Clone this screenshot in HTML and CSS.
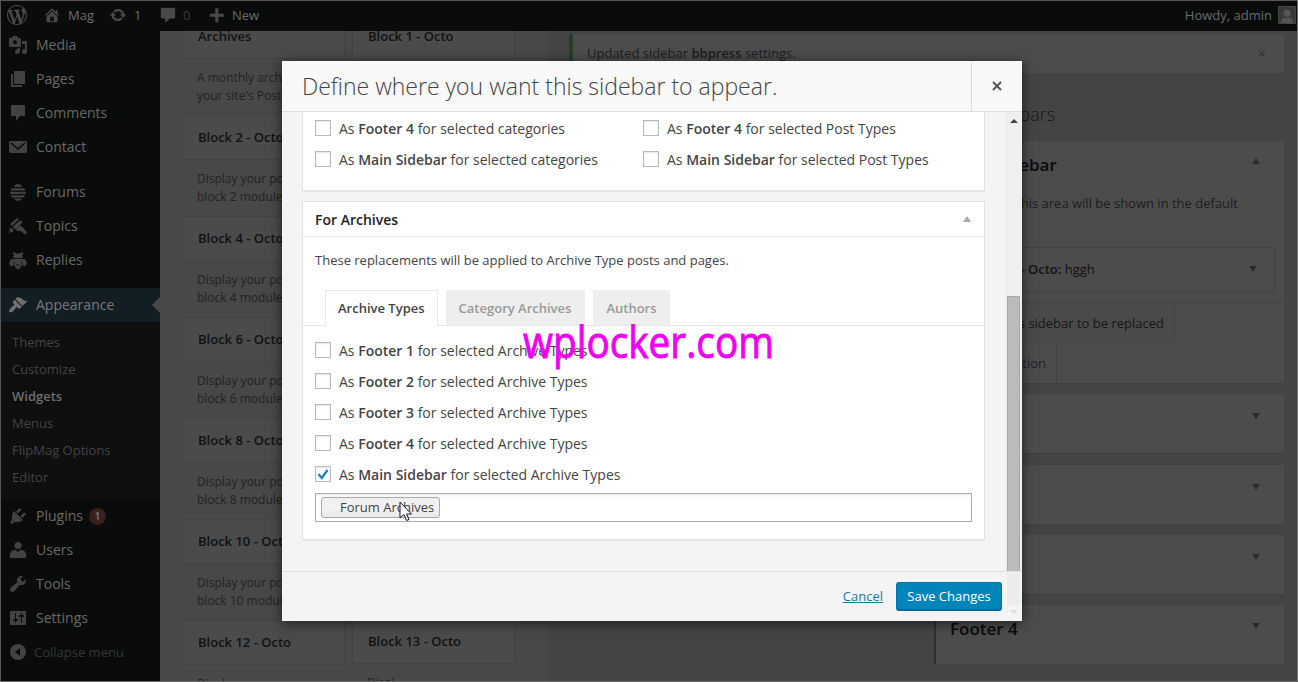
FILE: index.html
```html
<!DOCTYPE html>
<html lang="en">
<head>
<meta charset="utf-8">
<title>Widgets</title>
<link rel="stylesheet" href="styles.css">
</head>
<body>
<div class="screen">
  <header class="bar">
    <svg class="logo" viewBox="0 0 20 20"><path d="M20 10c0-5.51-4.49-10-10-10C4.48 0 0 4.49 0 10c0 5.52 4.48 10 10 10 5.51 0 10-4.48 10-10zM7.78 15.37L4.37 6.22c.55-.02 1.17-.08 1.17-.08.5-.06.44-1.13-.06-1.11 0 0-1.45.11-2.37.11-.18 0-.37 0-.58-.01C4.12 2.69 6.87 1.11 10 1.11c2.33 0 4.45.87 6.05 2.34-.68-.11-1.65.39-1.65 1.58 0 .74.45 1.36.9 2.1.35.61.55 1.36.55 2.46 0 1.49-1.4 5-1.4 5l-3.03-8.37c.54-.02.82-.17.82-.17.5-.05.44-1.25-.06-1.22 0 0-1.44.12-2.38.12-.87 0-2.33-.12-2.33-.12-.5-.03-.56 1.2-.06 1.22l.92.08 1.26 3.41zM17.41 10c.24-.64.74-1.87.43-4.25.7 1.29 1.05 2.71 1.05 4.25 0 3.29-1.73 6.24-4.4 7.78.97-2.59 1.94-5.2 2.92-7.78zM6.1 18.09C3.12 16.65 1.11 13.53 1.11 10c0-1.3.23-2.48.72-3.59C3.25 10.3 4.67 14.2 6.1 18.09zm4.03-6.63l2.58 6.98c-.86.29-1.76.45-2.71.45-.79 0-1.57-.11-2.29-.33.81-2.38 1.62-4.74 2.42-7.1z"/></svg>
    <div class="bar-item site"><svg viewBox="0 0 20 20"><path d="M16 8.5l1.53 1.53-1.06 1.06L10 4.6l-6.47 6.49-1.06-1.06L10 2.5l4 4v-2h2v4zm-6-2.46l6 5.99V18H4v-5.97zM12 17v-5H8v5h4z"/></svg>Mag</div>
    <div class="bar-item updates"><svg viewBox="0 0 20 20"><path d="M10.2 3.28c3.53 0 6.43 2.61 6.92 6h2.08l-3.5 4-3.5-4h2.32c-.45-1.97-2.21-3.45-4.32-3.45-1.45 0-2.73.71-3.54 1.78L4.95 5.66C6.23 4.2 8.11 3.28 10.2 3.28zm-.4 13.44c-3.52 0-6.43-2.61-6.92-6H.8l3.5-4c1.17 1.33 2.33 2.67 3.5 4H5.48c.45 1.97 2.21 3.45 4.32 3.45 1.45 0 2.73-.71 3.54-1.78l1.71 1.95c-1.28 1.46-3.15 2.38-5.25 2.38z"/></svg>1</div>
    <div class="bar-item replies"><svg viewBox="0 0 20 20"><path d="M4 2h12c1.100 0 2 .9 2 2v8c0 1.100-.9 2-2 2h-4l-5 5v-5H4c-1.100 0-2-.9-2-2V4c0-1.100.9-2 2-2z"/></svg><span>0</span></div>
    <div class="bar-item new"><svg viewBox="0 0 20 20"><path d="M17.500 8.500v3.500h-6v6h-3.500v-6h-6V8.500h6v-6h3.500v6z"/></svg>New</div>
    <div class="account">Howdy, admin<svg class="avatar" viewBox="0 0 18 18"><circle cx="9" cy="7" r="4"/><path d="M2 18c0-4 2-6 5-6h4c3 0 5 2 5 6z"/></svg></div>
  </header>

  <div class="workspace">
    <nav class="menu">
      <a class="entry"><svg viewBox="0 0 20 20"><path fill-rule="evenodd" d="M13 11V4c0-.55-.45-1-1-1h-1.670L9 1H5L3.670 3H2c-.55 0-1 .45-1 1v7c0 .55.45 1 1 1h10c.55 0 1-.45 1-1zM7 5.200a2 2 0 1 0 .01 0zM14 6h5v10.500c0 1.380-1.120 2.500-2.500 2.500S14 17.880 14 16.500s1.120-2.500 2.500-2.500c.17 0 .34.02.5.05V9h-3V6zm-4 8.050V13h2v3.500c0 1.380-1.120 2.500-2.500 2.500S7 17.880 7 16.500 8.120 14 9.500 14c.17 0 .34.02.5.05z"/></svg>Media</a>
      <a class="entry"><svg viewBox="0 0 20 20"><path d="M6 15V2h11v13H6zm-1 1h9v2H3V5h2v11z"/></svg>Pages</a>
      <a class="entry"><svg viewBox="0 0 20 20"><path d="M4 2h12c.6 0 1 .4 1 1v9c0 .6-.4 1-1 1h-4l-4 5v-5H4c-.6 0-1-.4-1-1V3c0-.6.4-1 1-1z"/></svg>Comments</a>
      <a class="entry"><svg viewBox="0 0 20 20"><path d="M2.500 4h15c.8 0 1.500.7 1.500 1.500v9c0 .8-.7 1.500-1.500 1.500h-15c-.8 0-1.500-.7-1.500-1.500v-9C1 4.700 1.700 4 2.500 4z"/><path class="cut" d="M3 6l7 6 7-6"/></svg>Contact</a>
      <div class="gap"></div>
      <a class="entry"><svg viewBox="0 0 20 20"><path d="M6 5c1-4 7-4 8 0zM3.500 6.200h13l1 2.300H2.500zM2 9.700h16l-.5 2.300h-15zM3 13.200h14l-1 2.300H4zM6 16.500h8c-1 3-7 3-8 0z"/></svg>Forums</a>
      <a class="entry"><svg viewBox="0 0 20 20"><path d="M2 8l7-6 2 1-7 7zM4.500 11l8-7 2 2.500-7 7zM8 13.500l4-4 3 2 4 5-2 2-5-4-2 1zM1.500 12l3 .5 1 3-4 1.500z"/></svg>Topics</a>
      <a class="entry"><svg viewBox="0 0 20 20"><path d="M6 2l2 1.500h4L14 2l1.500 1L14 5l1 2-1.500 2 4 .5 1.500 4-2 3-3-1.500L12 18l-2 1.500L8 18l-2-3-3 1.500-2-3 1.500-4 4-.5L5 7l1-2-1.500-2z"/><path class="cut thin" d="M6 8.500h8M6.500 11.500l-1 3M13.500 11.500l1 3M8 15h4"/></svg>Replies</a>
      <div class="gap"></div>
      <a class="entry current"><svg viewBox="0 0 20 20"><path d="M14.480 11.060L7.410 3.990l1.500-1.500c.5-.56 2.300-.47 3.510.32 1.210.8 1.430 1.280 2.910 2.100 1.180.64 2.450 1.260 4.450.85zm-.71.71L6.700 4.700 4.930 6.470c-.39.39-.39 1.020 0 1.410l1.060 1.060c.39.39.39 1.030 0 1.420-.6.6-1.430 1.110-2.210 1.690-.35.26-.7.53-1.010.84C1.430 14.230.4 16.080 1.400 17.070c.99 1 2.840-.03 4.180-1.360.31-.31.58-.66.85-1.020.57-.78 1.080-1.610 1.690-2.210.39-.39 1.020-.39 1.410 0l1.060 1.060c.39.39 1.020.39 1.410 0z"/></svg>Appearance<i class="notch"></i></a>
      <div class="submenu"><a>Themes</a><a>Customize</a><a class="active">Widgets</a><a>Menus</a><a>FlipMag Options</a><a>Editor</a></div>
      <a class="entry"><svg viewBox="0 0 20 20"><path d="M13.110 4.360L9.870 7.600 8 5.730l3.240-3.240c.35-.34 1.050-.2 1.560.32.52.51.66 1.210.31 1.550zm-8 1.770l.91-1.120 9.010 9.010-1.190.84c-.71.71-2.630 1.160-3.820 1.160H6.140L4.900 17.260c-.59.59-1.540.59-2.120 0-.59-.58-.59-1.530 0-2.120l1.240-1.240v-3.880c0-1.130.4-3.190 1.090-3.890zm7.260 3.970l3.240-3.240c.34-.35 1.040-.21 1.550.31.52.51.66 1.210.31 1.550l-3.240 3.250z"/></svg>Plugins<b class="count">1</b></a>
      <a class="entry"><svg viewBox="0 0 20 20"><circle cx="10" cy="5.500" r="3.500"/><path d="M6.500 10h1l2.500 2 2.500-2h1c2.500 0 4.500 2 4.500 4.500V17c0 .6-.4 1-1 1H3c-.6 0-1-.4-1-1v-2.500C2 12 4 10 6.500 10z"/></svg>Users</a>
      <a class="entry"><svg viewBox="0 0 20 20"><path d="M16.680 9.770c-1.340 1.340-3.300 1.670-4.950.99l-5.410 6.520c-.99.99-2.590.99-3.580 0s-.99-2.590 0-3.570l6.520-5.420c-.68-1.650-.35-3.610.99-4.950 1.280-1.280 3.120-1.620 4.720-1.060l-2.890 2.890 2.820 2.820 2.860-2.870c.53 1.580.18 3.390-1.080 4.650z"/></svg>Tools</a>
      <a class="entry"><svg viewBox="0 0 20 20"><path d="M18 16V4c0-.55-.45-1-1-1H3c-.55 0-1 .45-1 1v12c0 .55.45 1 1 1h14c.55 0 1-.45 1-1zM8 11h1c.55 0 1 .45 1 1s-.45 1-1 1H8v1.500c0 .28-.22.5-.5.5s-.5-.22-.5-.5V13H6c-.55 0-1-.45-1-1s.45-1 1-1h1V5.500c0-.28.22-.5.5-.5s.5.22.5.5V11zm5-2h-1c-.55 0-1-.45-1-1s.45-1 1-1h1V5.500c0-.28.22-.5.5-.5s.5.22.5.5V7h1c.55 0 1 .45 1 1s-.45 1-1 1h-1v5.500c0 .28-.22.5-.5.5s-.5-.22-.5-.5V9z"/></svg>Settings</a>
      <a class="entry collapse"><svg viewBox="0 0 20 20"><circle cx="10" cy="10" r="8"/><path class="hole" d="M12 6v8l-5-4z"/></svg>Collapse menu</a>
    </nav>

    <section class="available">
      <div class="column">
        <div class="widget">Archives</div><p>A monthly archive of<br>your site's Posts.</p>
        <div class="widget">Block 2 - Octo</div><p>Display your posts<br>block 2 module.</p>
        <div class="widget">Block 4 - Octo</div><p>Display your posts<br>block 4 module.</p>
        <div class="widget">Block 6 - Octo</div><p>Display your posts<br>block 6 module.</p>
        <div class="widget">Block 8 - Octo</div><p>Display your posts<br>block 8 module.</p>
        <div class="widget">Block 10 - Octo</div><p>Display your posts<br>block 10 module.</p>
        <div class="widget">Block 12 - Octo</div><p>Displ</p>
      </div>
      <div class="column second">
        <div class="widget">Block 1 - Octo</div>
        <div class="last"><div class="widget">Block 13 - Octo</div><p>Displ</p></div>
      </div>
    </section>

    <main class="areas">
      <div class="notice"><span>Updated sidebar <b>bbpress</b> settings.</span><span class="dismiss">×</span></div>
      <h2>Sidebars</h2>
      <div class="area open">
        <div class="area-head"><h3>Main Sidebar</h3><i class="up"></i></div>
        <p>this area will be shown in the default</p>
        <div class="placed"><span><b>Block - Octo:</b> hggh</span><i class="down"></i></div>
        <div class="options">
          <div class="option allow">this sidebar to be replaced</div>
          <div class="option where">location</div>
        </div>
      </div>
      <div class="area"><i class="down"></i></div>
      <div class="area"><i class="down"></i></div>
      <div class="area"><i class="down"></i></div>
      <div class="area marked"><h3>Footer 4</h3><i class="down"></i></div>
    </main>
  </div>
</div>

<div class="dialog">
  <div class="dialog-head"><h1>Define where you want this sidebar to appear.</h1><div class="close"><svg viewBox="0 0 12 12"><path d="M2 2l8 8M10 2l-8 8"/></svg></div></div>
  <div class="dialog-main">
    <div class="panels">
      <div class="panel first">
        <div><label><i class="box"></i><span>As <b>Footer 4</b> for selected categories</span></label><label><i class="box"></i><span>As <b>Main Sidebar</b> for selected categories</span></label></div>
        <div><label><i class="box"></i><span>As <b>Footer 4</b> for selected Post Types</span></label><label><i class="box"></i><span>As <b>Main Sidebar</b> for selected Post Types</span></label></div>
      </div>
      <div class="panel">
        <div class="panel-head">For Archives<i class="up"></i></div>
        <p class="about">These replacements will be applied to Archive Type posts and pages.</p>
        <div class="tabs"><span class="tab on">Archive Types</span><span class="tab">Category Archives</span><span class="tab">Authors</span></div>
        <div class="choices">
          <label><i class="box"></i><span>As <b>Footer 1</b> for selected Archive Types</span></label>
          <label><i class="box"></i><span>As <b>Footer 2</b> for selected Archive Types</span></label>
          <label><i class="box"></i><span>As <b>Footer 3</b> for selected Archive Types</span></label>
          <label><i class="box"></i><span>As <b>Footer 4</b> for selected Archive Types</span></label>
          <label><i class="box"><svg viewBox="0 0 14 14"><path d="M2.500 7l3.300 4L11.500 3"/></svg></i><span>As <b>Main Sidebar</b> for selected Archive Types</span></label>
          <div class="picker"><span class="tag">Forum Archives</span></div>
        </div>
      </div>
    </div>
    <div class="scroll"><i class="arrow"></i><div class="thumb"></div></div>
  </div>
  <div class="dialog-foot"><a class="cancel">Cancel</a><span class="save">Save Changes</span><div class="scroll-end"><i></i></div></div>
</div>

<svg class="watermark" viewBox="0 0 260 56"><text x="1" y="38" textLength="251" lengthAdjust="spacingAndGlyphs">wplocker.com</text></svg>
<svg class="pointer" viewBox="0 0 13 21"><path d="M1 1v16l4-3.500 2.500 6 2.500-1-2.500-5.500h5z"/></svg>
</body>
</html>
```
FILE: styles.css
```css
* { box-sizing: border-box; }
body { margin: 0; width: 1298px; height: 682px; overflow: hidden; position: relative; font-family: "Open Sans", "Noto Sans", sans-serif; font-size: 13px; color: #444; }
h1, h2, h3, p { margin: 0; }
i { font-style: normal; }
b { font-weight: 600; }

.screen { height: 682px; display: flex; flex-direction: column; background: #444; border: 1px solid #555756; border-right: 1px solid #747474; border-bottom-color: #6d6d6d; overflow: hidden; }
.bar { height: 30px; flex: none; position: relative; z-index: 1; background: #0a0c0b; color: #6b6b6b; display: flex; align-items: center; line-height: 28px; padding-bottom: 2px; }
.bar svg { fill: #494949; }
.logo { width: 20px; height: 20px; margin-left: 6px; }
.bar-item { display: flex; align-items: center; }
.bar-item svg { width: 18px; height: 18px; }
.site { width: 66px; margin-left: 16px; gap: 7px; }
.updates { width: 50px; gap: 7px; }
.replies { width: 49px; gap: 6px; color: #3a3a3a; }
.new { gap: 6px; }
.account { margin-left: auto; display: flex; align-items: center; gap: 6px; padding-right: 1px; }
.bar .avatar { width: 18px; height: 18px; background: #393939; fill: #555; border: 1px solid #444; }

.workspace { flex: 1; min-height: 0; display: flex; }
.menu { width: 159px; flex: none; background: #0a0c0b; margin-top: -3px; }
.entry { height: 34px; display: flex; align-items: center; padding-left: 7px; gap: 8px; font-size: 14px; line-height: 34px; color: #686868; position: relative; }
.entry svg { width: 20px; height: 20px; fill: #424242; flex: none; }
.entry .cut { fill: none; stroke: #0a0c0b; stroke-width: 1.6; }
.entry .thin { stroke-width: .8; }
.entry .hole { fill: #0a0c0b; }
.gap { height: 11px; }
.current { background: #121d24; color: #787878; }
.current svg { fill: #707070; }
.notch { position: absolute; right: 0; top: 9px; border: 8px solid transparent; border-left: 0; border-right-color: #484848; }
.submenu { height: 177px; background: #0f0f0f; padding: 7px 0 0 11px; }
.submenu a { display: block; height: 27px; line-height: 27px; color: #434343; }
.submenu .active { color: #6e6e6e; font-weight: 600; }
.count { width: 17px; height: 17px; border-radius: 50%; background: #38201c; color: #7b6a66; font-size: 10px; font-weight: 700; line-height: 16px; text-align: center; margin-left: -2px; }
.collapse { font-size: 13px; color: #363636; gap: 6px; }
.collapse svg { fill: #424242; }

.available { width: 389px; flex: none; background: #484848; border-right: 1px solid #414141; padding-left: 22px; display: flex; gap: 7px; overflow: hidden; }
.column { width: 163px; height: 662px; flex: none; margin-top: -17px; }
.widget { height: 45px; background: #4b4b4b; border: 1px solid #434343; padding-left: 15px; line-height: 42px; font-weight: 600; color: #111; white-space: nowrap; }
.column p { height: 56px; padding: 10px 0 0 15px; line-height: 18px; font-size: 12px; color: #222; white-space: nowrap; }
.second { display: flex; flex-direction: column; justify-content: space-between; }
.last { height: 57px; }

.areas { flex: 1; padding: 3px 13px 0 20px; display: flex; flex-direction: column; color: #1c1c1c; }
.notice { height: 39px; flex: none; background: #4c4c4c; border-left: 4px solid #23402d; padding: 0 18px 0 14px; display: flex; justify-content: space-between; line-height: 38px; }
.dismiss { font-size: 15px; color: #303030; }
.areas h2 { height: 68px; line-height: 82px; padding-left: 416px; font-size: 18px; font-weight: 300; color: #181818; }
.area { width: 350px; height: 59px; flex: none; align-self: flex-end; background: #4c4c4c; margin-bottom: 11.300px; padding: 19px 24px 0 15px; display: flex; justify-content: space-between; box-shadow: 0 1px 1px #404040; }
.area > i { margin-left: auto; }
.area h3 { font-size: 17px; font-weight: 600; line-height: 24px; color: #0b0b0b; }
.open { height: 242px; display: block; padding: 0; }
.area-head { height: 48px; padding: 0 24px 0 15px; display: flex; justify-content: space-between; align-items: center; }
.area-head i { margin-bottom: 8px; }
.up { display: block; width: 0; height: 0; border: 4.500px solid transparent; border-top: 0; border-bottom: 6px solid #2b2b2b; }
.down { display: block; width: 0; height: 0; border: 4.500px solid transparent; border-bottom: 0; border-top: 6px solid #2b2b2b; }
.area > p { text-align: right; padding-right: 46px; line-height: 28px; height: 58px; }
.placed { width: 333px; height: 45px; margin-left: 8px; padding: 0 17px 2px 40px; display: flex; align-items: center; justify-content: space-between; border: 1px solid #424242; color: #111; }
.placed span { white-space: nowrap; }
.options { margin-top: 10px; border-top: 1px solid #434343; color: #161616; }
.option { height: 40px; line-height: 40px; text-align: right; border-right: 1px solid #404343; }
.allow { width: 241px; padding-right: 10px; background: #484b4a; }
.where { width: 123px; padding-right: 10px; color: #202328; }
.marked { border-left: 2px solid #1f382b; padding-left: 14px; padding-top: 12px; }
.marked i { margin-top: 6px; }

.dialog { position: absolute; left: 282px; top: 61px; width: 740px; height: 560px; background: #f4f4f4; box-shadow: 0 2px 12px rgba(0, 0, 0, .6); display: flex; flex-direction: column; }
.dialog-head { height: 51px; flex: none; background: #f8f8f8; border-bottom: 1px solid #ddd; display: flex; padding-left: 20px; justify-content: space-between; }
.dialog-head h1 { font-size: 23px; font-weight: 300; line-height: 50px; color: #444; white-space: nowrap; }
.close { width: 51px; border-left: 1px solid #ddd; display: flex; align-items: center; justify-content: center; }
.close svg { width: 12px; height: 12px; fill: none; stroke: #555; stroke-width: 2; }
.dialog-main { flex: 1; min-height: 0; display: flex; justify-content: space-between; overflow: hidden; }
.panels { width: 703px; padding-left: 20px; color: #444; }
.panel { height: 339px; background: #fff; border: 1px solid #e2e2e2; box-shadow: 0 1px 1px rgba(0, 0, 0, .04); }
.first { height: 79px; margin-bottom: 10px; border-top: 0; display: flex; padding: 1px 0 0 12px; }
.first > div { width: 328px; }
label { height: 31px; display: flex; align-items: center; gap: 8px; font-size: 14px; line-height: 20px; white-space: nowrap; }
.box { width: 16px; height: 16px; flex: none; margin-bottom: 2px; border: 1px solid #b4b9be; background: #fff; box-shadow: inset 0 1px 2px rgba(0, 0, 0, .1); }
.box svg { display: block; width: 14px; height: 14px; fill: none; stroke: #2383b5; stroke-width: 2.400; }
.panel-head { height: 35px; border-bottom: 1px solid #eee; display: flex; align-items: center; justify-content: space-between; padding: 0 13px 0 12px; font-size: 14px; font-weight: 600; color: #222; }
.panel-head .up { border-bottom-color: #aaa; }
.about { height: 53px; padding-left: 12px; line-height: 46px; }
.tabs { height: 36px; padding-left: 22px; display: flex; gap: 8px; border-bottom: 1px solid #e5e5e5; font-weight: 600; line-height: 36px; color: #999; }
.tab { height: 35px; padding: 0 13px; background: #eee; white-space: nowrap; }
.tab:nth-child(2) { padding-right: 14px; }
.on { height: 36px; padding: 0 12px; background: #fff; border: 1px solid #e8e8e8; border-bottom: 0; line-height: 35px; color: #444; }
.choices { padding: 9px 12px 0; }
.picker { height: 29px; margin-top: 3px; border: 1px solid #aaa; padding: 3px 5px; background: linear-gradient(#f1f1f1, #fff 15%); }
.tag { display: block; width: 119px; height: 21px; line-height: 19px; padding-left: 18px; border: 1px solid #aaa; border-radius: 3px; background: linear-gradient(#eee, #f3f3f3 50%, #e8e8e8); white-space: nowrap; }
.scroll { width: 17px; background: #efefef; padding: 7px 2px 0; display: flex; flex-direction: column; }
.arrow { width: 0; height: 0; margin-left: 3px; border: 4px solid transparent; border-top: 0; border-bottom: 4px solid #444; }
.thumb { flex: 1; margin-top: 173px; background: #bbb; border: 1px solid #a8a8a8; border-bottom: 0; }
.dialog-foot { height: 50px; flex: none; border-top: 1px solid #e0e0e0; display: flex; align-items: center; justify-content: flex-end; gap: 13px; }
.cancel { color: #23799c; text-decoration: underline; padding-bottom: 2px; }
.save { width: 106px; height: 29px; line-height: 27px; text-align: center; white-space: nowrap; color: #fff; background: #0085ba; border: 1px solid #0073aa; border-bottom: 2px solid #006799; border-radius: 3px; }
.scroll-end { width: 15px; height: 49px; margin-left: -8px; padding-right: 2px; }
.scroll-end::before { content: ""; display: block; height: 33px; background: #ececec; }
.scroll-end i { display: block; width: 0; margin: 5px 0 0 3px; border: 4px solid transparent; border-bottom: 0; border-top-color: #ddd; }

.watermark { position: absolute; left: 522px; top: 320px; width: 260px; height: 56px; font: 44px "Open Sans", sans-serif; fill: #f000f0; stroke: #f000f0; stroke-width: .9; }
.pointer { position: absolute; left: 399px; top: 501px; width: 13px; height: 21px; fill: #fff; stroke: #15152a; }
```
